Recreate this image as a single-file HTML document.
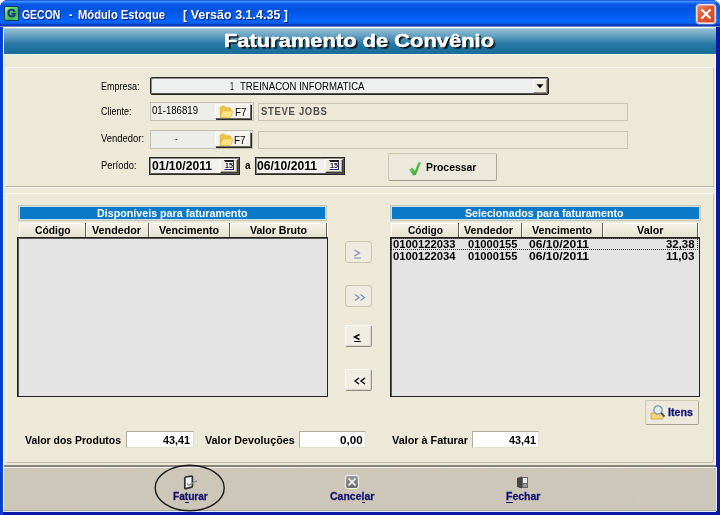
<!DOCTYPE html>
<html><head><meta charset="utf-8">
<style>
*{margin:0;padding:0;box-sizing:border-box}
html,body{width:720px;height:515px;overflow:hidden;background:#fff}
body{position:relative;font-family:"Liberation Sans",sans-serif;font-size:11px;color:#000}
div{position:absolute}
.t{white-space:pre;transform-origin:0 0}
.fld{background:#EDEDEA;border:1px solid #C5C1AC}
.etch{background:#ECE9D8;border:1px solid #C9C5B2}
.f7{background:#F4F3EC;border:1px solid #fff;border-right-color:#6f6d62;border-bottom-color:#6f6d62;box-shadow:1px 1px 0 #2a2a2a}
.dis{background:#EEEBE0;border:1px solid #C8C4B0;border-radius:3px}
.en{background:#EFEDE4;border:1px solid #fff;border-right:1px solid #9A988C;border-bottom:1px solid #8E8C80;box-shadow:inset -1px -1px 0 #D6D3C6;border-radius:2px}
.sunk{background:#fff;border:1px solid #b0ad9c;border-right-color:#e3e0d0;border-bottom-color:#e3e0d0}
.bhead{background:#0A7AC8;border:1px solid #C6E0EC;box-shadow:0 0 0 1px #C9C6B6}
.colh{background:linear-gradient(#F3F1E6,#E6E2D0);border-top:1px solid #fff;border-left:1px solid #fff;border-bottom:1px solid #9d9b8f}
.csep{width:2px;border-left:1px solid #5f5d55;border-right:1px solid #fff}
.list{background:#E4E4E4;border:1px solid #222;box-shadow:inset 1px 1px 0 #555}
</style></head><body>
<!-- window frame -->
<div style="left:0;top:0;width:720px;height:515px;background:#0A18A8;border-radius:8px 8px 0 0"></div>
<div style="left:0;top:20px;width:3px;height:495px;background:linear-gradient(90deg,#0638D0,#0848E0)"></div>
<div style="left:0;top:0;width:720px;height:27px;border-radius:8px 8px 0 0;background:linear-gradient(#1848D8 0px,#3A8EFF 1.5px,#2A7AF8 2.5px,#0858E4 4px,#0054E2 10px,#005CEE 15px,#0266FC 21px,#0560F4 23px,#0838B8 25px,#0834B0 26px,#7088C0 26px,#7088C0 27px)"></div>
<div style="left:3px;top:27px;width:713px;height:485px;background:#ECE9D8;border-left:1px solid #fff;border-top:1px solid #fff"></div>
<div style="left:715px;top:27px;width:1px;height:485px;background:#F4F4FF"></div>
<div style="left:3px;top:511px;width:713px;height:1px;background:#E6EAF6"></div>
<!-- title icon -->
<div style="left:4px;top:6px;width:15px;height:15px;border-radius:2px;background:linear-gradient(135deg,#B0F4B0 0%,#5CD46C 35%,#3CB850 70%,#6AD878 100%);border:1px solid #0E3A5A"></div>
<div class="t" style="left:6px;top:8px;width:11px;height:11px;font-size:11px;line-height:11px;font-weight:900;color:#1C3C72;text-align:center;-webkit-text-stroke:0.6px #1C3C72">G</div>
<!-- close btn -->
<div style="left:696px;top:4px;width:20px;height:20px;border-radius:3px;border:1px solid #E4E0F4;box-shadow:inset 0 0 0 1px #E8A898,0 0 0 0.5px #8090D0;background:linear-gradient(135deg,#EC8A6A 0%,#E05A34 40%,#CF4420 100%)"></div>
<svg style="position:absolute;left:696px;top:4px" width="20" height="20"><path d="M5.5 5.5 L14.5 14.5 M14.5 5.5 L5.5 14.5" stroke="#fff" stroke-width="2.2" stroke-linecap="butt"/></svg>
<!-- banner -->
<div style="left:4px;top:28px;width:712px;height:26px;background:linear-gradient(#D0E6EC 0px,#90BED2 1px,#78AECA 5px,#4A8FB4 11px,#2878A4 16px,#1C709C 22px,#1A6E9A 27px)"></div>
<div style="left:4px;top:54px;width:711px;height:1px;background:#FAF8F0"></div>
<!-- faint panel borders -->
<div style="left:6px;top:67px;width:708px;height:119px;border-left:1px solid #F7F5EC;border-top:1px solid #F7F5EC;border-right:1px solid #CFCBB8"></div>
<div style="left:6px;top:186px;width:708px;height:1px;background:#B3AF9C"></div>
<div style="left:6px;top:187px;width:708px;height:1px;background:#FAF9F2"></div>
<div style="left:6px;top:193px;width:708px;height:270px;border-left:1px solid #F7F5EC;border-top:1px solid #F7F5EC;border-right:1px solid #C9C5B2;border-bottom:1px solid #BDB9A6;border-radius:0 0 3px 3px"></div>

<!-- empresa combo -->
<div style="left:150px;top:77px;width:399px;height:18px;border:1px solid #262626;box-shadow:inset 1px 1px 0 #8e8c84,inset -1px -1px 0 #55534c;border-radius:2px;background:#EEF0F0"></div>
<div class="f7" style="left:533px;top:79px;width:14px;height:14px;box-shadow:none;border-right-color:#9A9686;border-bottom-color:#9A9686;background:#EFEDE3"></div>
<svg style="position:absolute;left:533px;top:79px" width="14" height="14"><path d="M3.5 5.3 L10.5 5.3 L7 9.3 Z" fill="#000"/></svg>

<!-- cliente -->
<div class="fld" style="left:150px;top:102px;width:104px;height:19px"></div>
<div class="f7" style="left:215px;top:104px;width:36px;height:15px"></div>
<div class="etch" style="left:258px;top:103px;width:370px;height:18px"></div>
<!-- vendedor -->
<div class="fld" style="left:150px;top:130px;width:103px;height:19px"></div>
<div class="f7" style="left:215px;top:132px;width:36px;height:15px"></div>
<div class="etch" style="left:258px;top:131px;width:370px;height:18px"></div>
<!-- folder icons -->
<svg style="position:absolute;left:219px;top:105px" width="15" height="14"><path d="M1.2 3 Q1.2 1.2 3 1.2 L5.5 1.2 L7 2.8 L10.5 2.8 Q12 2.8 12 4.2 L12 11 L1.2 12.5 Z" fill="#EDC440" stroke="#D9A82A" stroke-width="0.6"/><path d="M1.2 12.5 L3.4 6.8 Q3.8 5.8 4.8 5.8 L13.2 5.8 Q14.4 5.8 14 6.9 L12.2 11.6 Q11.9 12.5 10.9 12.5 Z" fill="#F9E383" stroke="#DDB23A" stroke-width="0.6"/></svg>
<svg style="position:absolute;left:218.5px;top:133px" width="15" height="14"><path d="M1.2 3 Q1.2 1.2 3 1.2 L5.5 1.2 L7 2.8 L10.5 2.8 Q12 2.8 12 4.2 L12 11 L1.2 12.5 Z" fill="#EDC440" stroke="#D9A82A" stroke-width="0.6"/><path d="M1.2 12.5 L3.4 6.8 Q3.8 5.8 4.8 5.8 L13.2 5.8 Q14.4 5.8 14 6.9 L12.2 11.6 Q11.9 12.5 10.9 12.5 Z" fill="#F9E383" stroke="#DDB23A" stroke-width="0.6"/></svg>

<!-- dates -->
<div style="left:149px;top:157px;width:91px;height:18px;border:1px solid #262626;box-shadow:inset 1px 1px 0 #8e8c84,inset -1px -1px 0 #55534c;background:#F1F1EE"></div>
<div style="left:220px;top:159px;width:18px;height:14px;background:#ECE9D8;border:1px solid #fff;border-right-color:#3a3a3a;border-bottom-color:#3a3a3a;box-shadow:inset -1px -1px 0 #A5A298"></div><div style="left:224px;top:160px;width:10px;height:10px;background:#fff;border-top:2px solid #1e1e1e;border-right:1px solid #2a2a7a;border-bottom:1px solid #2a2a7a;border-left:1px solid #e8e8f0"></div><div class="t" style="left:225px;top:162px;font-size:7.5px;line-height:7px;font-weight:bold;color:#111;transform:scaleX(0.95)">15</div>
<div style="left:255px;top:157px;width:90px;height:18px;border:1px solid #262626;box-shadow:inset 1px 1px 0 #8e8c84,inset -1px -1px 0 #55534c;background:#F1F1EE"></div>
<div style="left:325px;top:159px;width:18px;height:14px;background:#ECE9D8;border:1px solid #fff;border-right-color:#3a3a3a;border-bottom-color:#3a3a3a;box-shadow:inset -1px -1px 0 #A5A298"></div><div style="left:329px;top:160px;width:10px;height:10px;background:#fff;border-top:2px solid #1e1e1e;border-right:1px solid #2a2a7a;border-bottom:1px solid #2a2a7a;border-left:1px solid #e8e8f0"></div><div class="t" style="left:330px;top:162px;font-size:7.5px;line-height:7px;font-weight:bold;color:#111;transform:scaleX(0.95)">15</div>

<!-- processar -->
<div style="left:388px;top:153px;width:109px;height:28px;background:#ECE9DC;border:1px solid #CAC6B2;border-right-color:#A9A590;border-bottom-color:#A09C88;border-radius:2px"></div>
<svg style="position:absolute;left:407px;top:161px" width="15" height="15"><defs><linearGradient id="gck" x1="0" y1="0" x2="1" y2="1"><stop offset="0" stop-color="#8EE07E"/><stop offset="1" stop-color="#22962A"/></linearGradient></defs><path d="M2 8.5 L5.5 6.5 L7.8 10 L11.5 1 L14 1.8 L8.8 14 L6.2 14.5 Z" fill="url(#gck)"/></svg>

<!-- lists -->
<div class="bhead" style="left:19px;top:206px;width:307px;height:14px"></div>
<div class="colh" style="left:19px;top:223px;width:309px;height:15px"></div>
<div class="csep" style="left:85px;top:223px;height:14px"></div>
<div class="csep" style="left:148px;top:223px;height:14px"></div>
<div class="csep" style="left:229px;top:223px;height:14px"></div>
<div class="csep" style="left:326px;top:223px;height:14px"></div>
<div class="list" style="left:17px;top:237px;width:311px;height:160px"></div>

<div class="bhead" style="left:391px;top:206px;width:309px;height:14px"></div>
<div class="colh" style="left:391px;top:223px;width:308px;height:15px"></div>
<div class="csep" style="left:458px;top:223px;height:14px"></div>
<div class="csep" style="left:521px;top:223px;height:14px"></div>
<div class="csep" style="left:602px;top:223px;height:14px"></div>
<div class="csep" style="left:697px;top:223px;height:14px"></div>
<div class="list" style="left:390px;top:237px;width:310px;height:160px"></div>
<div style="left:391px;top:238px;width:307px;height:12px;border:1px dotted #333"></div>

<!-- mid buttons -->
<div class="dis" style="left:345px;top:241px;width:27px;height:22px"></div>
<div class="dis" style="left:345px;top:285px;width:27px;height:22px"></div>
<div class="en" style="left:345px;top:325px;width:27px;height:22px"></div>
<div class="en" style="left:345px;top:369px;width:27px;height:22px"></div>
<svg style="position:absolute;left:345px;top:241px" width="27" height="22"><path d="M9.5 9 L14.5 12 L9.5 15" stroke="#7D8FC7" stroke-width="1.3" fill="none"/><path d="M9 17 L16 17" stroke="#7D8FC7" stroke-width="1"/></svg>
<svg style="position:absolute;left:345px;top:285px" width="27" height="22"><path d="M10 9.5 L14 12.5 L10 15.5 M15.5 9.5 L19.5 12.5 L15.5 15.5" stroke="#7D8FC7" stroke-width="1.3" fill="none"/></svg>
<svg style="position:absolute;left:345px;top:325px" width="27" height="22"><path d="M14.5 9.5 L9.5 12 L14.5 14.5" stroke="#000" stroke-width="1.4" fill="none"/><path d="M9 16.5 L16 16.5" stroke="#000" stroke-width="1"/></svg>
<svg style="position:absolute;left:345px;top:369px" width="27" height="22"><path d="M14 9 L10 12 L14 15 M20 9 L16 12 L20 15" stroke="#000" stroke-width="1.4" fill="none"/></svg>

<!-- itens button -->
<div style="left:645px;top:400px;width:54px;height:25px;background:#ECE9DC;border:1px solid #CCC8B4;border-right-color:#ADA994;border-bottom-color:#A5A18C;border-radius:2px"></div>
<svg style="position:absolute;left:650px;top:404px" width="16" height="17"><path d="M1 9 L1 15 L13 15 L13 9 Z" fill="#F2D77A" stroke="#C9A23A" stroke-width="0.8"/><circle cx="8" cy="6" r="4.2" fill="#DDEBF4" stroke="#7C96A8" stroke-width="1.2"/><path d="M11 9 L14.5 12.5" stroke="#555" stroke-width="1.8"/></svg>

<!-- totals -->
<div class="sunk" style="left:126px;top:431px;width:68px;height:17px"></div>
<div class="sunk" style="left:299px;top:431px;width:67px;height:17px"></div>
<div class="sunk" style="left:472px;top:431px;width:67px;height:17px"></div>

<!-- toolbar -->
<div style="left:4px;top:465px;width:712px;height:2px;background:#86847A"></div>
<div style="left:3px;top:467px;width:714px;height:44px;background:#CCC7B9;border-left:1px solid #fff;border-right:1px solid #E8E8F0;border-bottom:1px solid #ADA99D;border-top:1px solid #F2F0E6"></div>
<svg style="position:absolute;left:4px;top:468px" width="712" height="42"><filter id="nz"><feTurbulence type="fractalNoise" baseFrequency="0.35" numOctaves="2" seed="3"/><feColorMatrix values="0 0 0 0 0.5  0 0 0 0 0.5  0 0 0 0 0.45  0 0 0 0.9 -0.35"/></filter><rect width="712" height="42" filter="url(#nz)" opacity="0.25"/></svg>
<svg style="position:absolute;left:150px;top:460px" width="80" height="55"><ellipse cx="39.7" cy="28" rx="34.5" ry="22.8" fill="none" stroke="#1a1a1a" stroke-width="1.4"/></svg>
<!-- faturar icon -->
<svg style="position:absolute;left:182px;top:474px" width="18" height="17"><path d="M2.8 4.2 Q2.8 3.2 3.8 3 L9.4 2.2 Q10.4 2.1 10.4 3.1 L10.4 12.2 Q10.4 12.9 9.6 13.1 L3.8 14.6 Q2.8 14.8 2.8 13.8 Z" fill="#f6f6f6" stroke="#2e2e2e" stroke-width="1.7"/><path d="M5 9.5 Q6.5 12 8.5 10.5 Q11 8 15 7" stroke="#8a8a8a" stroke-width="1.4" fill="none"/></svg>
<!-- cancelar icon -->
<div style="left:345px;top:475px;width:14px;height:14px;border-radius:3px;border:1px solid #fff;background:linear-gradient(#9b9b9b,#6a6a6a)"></div>
<svg style="position:absolute;left:345px;top:475px" width="14" height="14"><path d="M3.5 3.5 L10.5 10.5 M10.5 3.5 L3.5 10.5" stroke="#fff" stroke-width="1.6"/></svg>
<!-- fechar icon -->
<svg style="position:absolute;left:516px;top:476px" width="13" height="13"><path d="M1 2 L6 0.5 L6 12.5 L1 11 Z" fill="#444"/><rect x="6" y="1" width="6" height="11" fill="#666"/><rect x="7" y="2" width="4" height="5" fill="#eee"/><rect x="7" y="8" width="4" height="3" fill="#999"/></svg>
<!-- underlines -->
<div style="left:185px;top:502px;width:4px;height:1px;background:#14146e"></div>
<div style="left:362px;top:502px;width:3px;height:1px;background:#14146e"></div>
<div style="left:506px;top:502px;width:7px;height:1px;background:#14146e"></div>

<div class=t style='left:22.00px;top:7.75px;font-size:13px;line-height:13px;font-weight:bold;color:#fff;transform:scaleX(0.8034);text-shadow:1px 1px 0 #0a1a70'>GECON</div>
<div class=t style='left:69.00px;top:7.75px;font-size:13px;line-height:13px;font-weight:bold;color:#fff;transform:scaleX(0.8058);text-shadow:1px 1px 0 #0a1a70'>-</div>
<div class=t style='left:78.00px;top:7.75px;font-size:13px;line-height:13px;font-weight:bold;color:#fff;transform:scaleX(0.8605);text-shadow:1px 1px 0 #0a1a70'>Módulo Estoque</div>
<div class=t style='left:183.00px;top:7.75px;font-size:13px;line-height:13px;font-weight:bold;color:#fff;transform:scaleX(0.9622);text-shadow:1px 1px 0 #0a1a70'>[ Versão 3.1.4.35 ]</div>
<div class=t style='left:224.00px;top:31.12px;font-size:19px;line-height:19px;font-weight:bold;color:#fff;transform:scaleX(1.1521);-webkit-text-stroke:0.5px #fff;text-shadow:1px 1px 0 #000,2px 2px 0 rgba(0,0,0,.55)'>Faturamento de Convênio</div>
<div class=t style='left:100.50px;top:81.19px;font-size:11px;line-height:11px;font-weight:normal;color:#000;transform:scaleX(0.8178);'>Empresa:</div>
<div class=t style='left:100.50px;top:106.44px;font-size:11px;line-height:11px;font-weight:normal;color:#000;transform:scaleX(0.8178);'>Cliente:</div>
<div class=t style='left:100.50px;top:133.19px;font-size:11px;line-height:11px;font-weight:normal;color:#000;transform:scaleX(0.8573);'>Vendedor:</div>
<div class=t style='left:100.50px;top:160.19px;font-size:11px;line-height:11px;font-weight:normal;color:#000;transform:scaleX(0.8535);'>Período:</div>
<div class=t style='left:229.50px;top:80.69px;font-size:11px;line-height:11px;font-weight:normal;color:#000;transform:scaleX(0.6531);'>1</div>
<div class=t style='left:240.00px;top:80.69px;font-size:11px;line-height:11px;font-weight:normal;color:#000;transform:scaleX(0.8719);'>TREINACON INFORMATICA</div>
<div class=t style='left:152.20px;top:105.19px;font-size:11px;line-height:11px;font-weight:normal;color:#000;transform:scaleX(0.8744);'>01-186819</div>
<div class=t style='left:235.00px;top:107.39px;font-size:11px;line-height:11px;font-weight:normal;color:#000;transform:scaleX(0.8954);'>F7</div>
<div class=t style='left:175.00px;top:133.19px;font-size:11px;line-height:11px;font-weight:normal;color:#000;transform:scaleX(0.6809);'>-</div>
<div class=t style='left:234.40px;top:134.69px;font-size:11px;line-height:11px;font-weight:normal;color:#000;transform:scaleX(0.8954);'>F7</div>
<div class=t style='left:260.50px;top:105.69px;font-size:11px;line-height:11px;font-weight:bold;color:#4d4d4d;transform:scaleX(0.8628);letter-spacing:0.8px'>STEVE JOBS</div>
<div class=t style='left:152.00px;top:160.14px;font-size:12px;line-height:12px;font-weight:bold;color:#000;transform:scaleX(1.0100);'>01/10/2011</div>
<div class=t style='left:245.00px;top:160.19px;font-size:11px;line-height:11px;font-weight:bold;color:#000;transform:scaleX(0.8980);'>a</div>
<div class=t style='left:257.00px;top:160.34px;font-size:12px;line-height:12px;font-weight:bold;color:#000;transform:scaleX(1.0100);'>06/10/2011</div>
<div class=t style='left:426.00px;top:161.69px;font-size:11px;line-height:11px;font-weight:bold;color:#000;transform:scaleX(0.9470);'>Processar</div>
<div class=t style='left:97.00px;top:207.69px;font-size:11px;line-height:11px;font-weight:bold;color:#fff;transform:scaleX(0.9731);'>Disponíveis para faturamento</div>
<div class=t style='left:465.00px;top:207.69px;font-size:11px;line-height:11px;font-weight:bold;color:#fff;transform:scaleX(0.9675);'>Selecionados para faturamento</div>
<div class=t style='left:34.50px;top:225.19px;font-size:11px;line-height:11px;font-weight:bold;color:#000;transform:scaleX(0.9369);'>Código</div>
<div class=t style='left:92.00px;top:225.19px;font-size:11px;line-height:11px;font-weight:bold;color:#000;transform:scaleX(0.9776);'>Vendedor</div>
<div class=t style='left:159.00px;top:225.19px;font-size:11px;line-height:11px;font-weight:bold;color:#000;transform:scaleX(0.9717);'>Vencimento</div>
<div class=t style='left:250.00px;top:225.19px;font-size:11px;line-height:11px;font-weight:bold;color:#000;transform:scaleX(0.9613);'>Valor Bruto</div>
<div class=t style='left:407.50px;top:225.19px;font-size:11px;line-height:11px;font-weight:bold;color:#000;transform:scaleX(0.9237);'>Código</div>
<div class=t style='left:464.00px;top:225.19px;font-size:11px;line-height:11px;font-weight:bold;color:#000;transform:scaleX(0.9776);'>Vendedor</div>
<div class=t style='left:531.50px;top:225.19px;font-size:11px;line-height:11px;font-weight:bold;color:#000;transform:scaleX(0.9717);'>Vencimento</div>
<div class=t style='left:636.50px;top:225.19px;font-size:11px;line-height:11px;font-weight:bold;color:#000;transform:scaleX(0.9849);'>Valor</div>
<div class=t style='left:393.00px;top:238.94px;font-size:11px;line-height:11px;font-weight:bold;color:#000;transform:scaleX(1.0215);'>0100122033</div>
<div class=t style='left:468.00px;top:238.94px;font-size:11px;line-height:11px;font-weight:bold;color:#000;transform:scaleX(1.0112);'>01000155</div>
<div class=t style='left:529.00px;top:238.94px;font-size:11px;line-height:11px;font-weight:bold;color:#000;transform:scaleX(1.1019);'>06/10/2011</div>
<div class=t style='left:665.50px;top:238.94px;font-size:11px;line-height:11px;font-weight:bold;color:#000;transform:scaleX(1.0352);'>32,38</div>
<div class=t style='left:393.00px;top:251.09px;font-size:11px;line-height:11px;font-weight:bold;color:#000;transform:scaleX(1.0215);'>0100122034</div>
<div class=t style='left:468.00px;top:251.09px;font-size:11px;line-height:11px;font-weight:bold;color:#000;transform:scaleX(1.0112);'>01000155</div>
<div class=t style='left:529.00px;top:251.09px;font-size:11px;line-height:11px;font-weight:bold;color:#000;transform:scaleX(1.1019);'>06/10/2011</div>
<div class=t style='left:665.50px;top:251.09px;font-size:11px;line-height:11px;font-weight:bold;color:#000;transform:scaleX(1.0586);'>11,03</div>
<div class=t style='left:25.30px;top:435.29px;font-size:11px;line-height:11px;font-weight:bold;color:#000;transform:scaleX(0.9518);'>Valor dos Produtos</div>
<div class=t style='left:162.50px;top:435.29px;font-size:11px;line-height:11px;font-weight:bold;color:#000;transform:scaleX(0.9807);'>43,41</div>
<div class=t style='left:205.30px;top:435.29px;font-size:11px;line-height:11px;font-weight:bold;color:#000;transform:scaleX(0.9780);'>Valor Devoluções</div>
<div class=t style='left:340.00px;top:435.29px;font-size:11px;line-height:11px;font-weight:bold;color:#000;transform:scaleX(1.0643);'>0,00</div>
<div class=t style='left:391.80px;top:435.29px;font-size:11px;line-height:11px;font-weight:bold;color:#000;transform:scaleX(0.9864);'>Valor à Faturar</div>
<div class=t style='left:508.80px;top:435.29px;font-size:11px;line-height:11px;font-weight:bold;color:#000;transform:scaleX(0.9807);'>43,41</div>
<div class=t style='left:668.00px;top:406.69px;font-size:11px;line-height:11px;font-weight:bold;color:#14146e;transform:scaleX(0.9732);-webkit-text-stroke:0.3px #14146e'>Itens</div>
<div class=t style='left:172.75px;top:491.29px;font-size:11px;line-height:11px;font-weight:bold;color:#14146e;transform:scaleX(0.9167);-webkit-text-stroke:0.3px #14146e'>Faturar</div>
<div class=t style='left:330.00px;top:491.29px;font-size:11px;line-height:11px;font-weight:bold;color:#14146e;transform:scaleX(0.9552);-webkit-text-stroke:0.3px #14146e'>Cancelar</div>
<div class=t style='left:505.60px;top:491.29px;font-size:11px;line-height:11px;font-weight:bold;color:#14146e;transform:scaleX(0.9535);-webkit-text-stroke:0.3px #14146e'>Fechar</div>
</body></html>
